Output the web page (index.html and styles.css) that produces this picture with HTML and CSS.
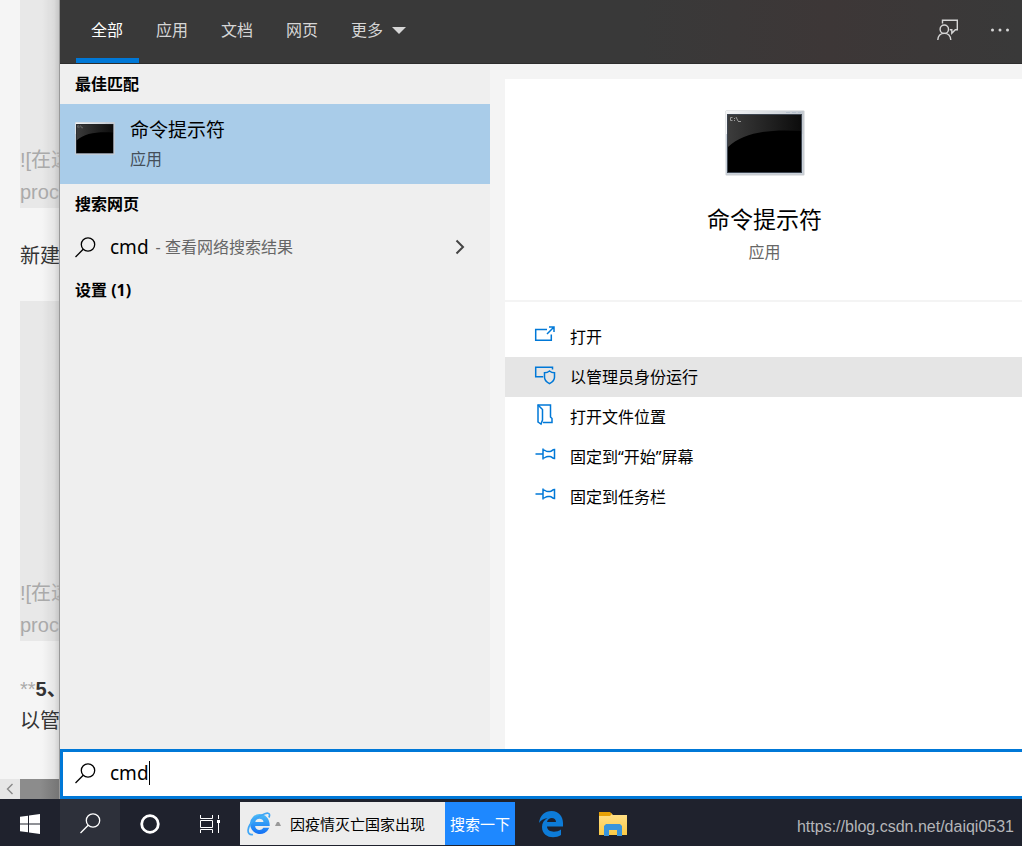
FILE: index.html
```html
<!DOCTYPE html>
<html lang="zh-CN">
<head>
<meta charset="utf-8">
<title>搜索</title>
<link rel="stylesheet" href="styles.css">
</head>
<body>
<svg class="defs" aria-hidden="true">
  <defs>
    <linearGradient id="frame" x1="0" y1="0" x2="1" y2="0"><stop offset="0" stop-color="#f4f5f6"/><stop offset="1" stop-color="#c3c9d0"/></linearGradient>
    <linearGradient id="gloss" x1="0" y1="0" x2="1" y2="0"><stop offset="0" stop-color="#3c3c3c"/><stop offset="1" stop-color="#0c0c0c"/></linearGradient>
    <linearGradient id="ie" x1="0" y1="0" x2="0" y2="1"><stop offset="0" stop-color="#4dbcf7"/><stop offset="1" stop-color="#1270f5"/></linearGradient>
    <linearGradient id="folder" x1="0" y1="0" x2="0" y2="1"><stop offset="0" stop-color="#ffe08a"/><stop offset="1" stop-color="#fccb45"/></linearGradient>
  </defs>
  <symbol id="console" viewBox="0 0 80 66">
    <rect x="0.5" y="0.5" width="79" height="65" rx="1" fill="#c9cdd2"/>
    <rect x="1" y="1" width="77" height="63" fill="#c9d1da"/>
    <rect x="1" y="1" width="77" height="23" fill="url(#frame)"/>
    <path d="M61 2.500h4M67 2.500h4M73 2.500h3" stroke="#b4bfcb"/>
    <rect x="2" y="4" width="75" height="59" fill="#3d4550"/>
    <rect x="3" y="5" width="73" height="57" fill="#000"/>
    <path d="M3 5h73v16C45 19 19 22 3 37z" fill="url(#gloss)"/>
    <path d="M7.500 7.500h-2v3h2M9.500 8v1M9.500 10v1M11 7l2 4M13 11.500h3" fill="none" stroke="#999"/>
  </symbol>
  <symbol id="magnifier" viewBox="0 0 21 21">
    <circle cx="13" cy="7.500" r="6.700" fill="none" stroke="currentColor" stroke-width="1.300"/>
    <path d="M8.200 12.300L.5 20" fill="none" stroke="currentColor" stroke-width="1.300"/>
  </symbol>
  <symbol id="pin" viewBox="0 0 22 22">
    <path d="M.5 8h7M8 2.500v11M8 4c3 0 2 1.500 5 1.500h2c2 0 2-2 4.500-2v9c-2.500 0-2.500-2-4.500-2h-2c-3 0-2 1.500-5 1.500" fill="none" stroke="currentColor" stroke-width="1.500"/>
  </symbol>
</svg>

<div class="desktop">
  <section class="editor">
    <div class="editor-text">
      <pre class="code code-first">![在这
proc</pre>
      <p class="line">新建</p>
      <pre class="code code-second">![在这
proc</pre>
      <p class="line last"><span class="stars">**</span><b>5、</b><br>以管</p>
    </div>
    <div class="scrollbar">
      <button class="scroll-arrow" aria-label="向左滚动"><svg width="8" height="12" viewBox="0 0 8 12"><path d="M6.500 1L1.500 6l5 5" fill="none" stroke="#888" stroke-width="1.400"/></svg></button>
      <div class="thumb"></div>
    </div>
  </section>

  <main class="panel">
    <header class="tabs">
      <button class="tab active">全部</button>
      <button class="tab">应用</button>
      <button class="tab">文档</button>
      <button class="tab">网页</button>
      <button class="tab">更多<svg width="14" height="7" viewBox="0 0 14 7"><path d="M0 0h14L7 7z" fill="currentColor"/></svg></button>
      <div class="tools">
        <button class="tool" aria-label="反馈"><svg width="22" height="22" viewBox="0 0 22 22" fill="none" stroke="currentColor" stroke-width="1.400"><path d="M5.500 4.500V1.200h14.800v9.600h-2l-3.500 3.500v-3.500h-2"/><circle cx="7.300" cy="10.200" r="4.200"/><path d="M.8 21c.3-4 2.900-6.600 6.500-6.600s6.200 2.600 6.500 6.600"/></svg></button>
        <button class="tool" aria-label="选项"><svg width="20" height="4" viewBox="0 0 20 4" fill="currentColor"><circle cx="2.500" cy="2" r="1.500"/><circle cx="10" cy="2" r="1.500"/><circle cx="17.500" cy="2" r="1.500"/></svg></button>
      </div>
    </header>

    <div class="content">
      <section class="results">
        <h2 class="group">最佳匹配</h2>
        <button class="best">
          <svg class="best-icon"><use href="#console"/></svg>
          <span class="best-text"><span class="best-name">命令提示符</span><span class="best-kind">应用</span></span>
        </button>
        <h2 class="group">搜索网页</h2>
        <button class="web">
          <svg class="glass"><use href="#magnifier"/></svg>
          <span class="query">cmd</span><span class="hint">- 查看网络搜索结果</span>
          <svg class="chevron" width="10" height="16" viewBox="0 0 10 16"><path d="M1.500 1.500L8 8l-6.500 6.500" fill="none" stroke="#444" stroke-width="2"/></svg>
        </button>
        <h2 class="group">设置 (1)</h2>
      </section>

      <section class="detail">
        <div class="hero">
          <svg class="hero-icon"><use href="#console"/></svg>
          <h1 class="hero-name">命令提示符</h1>
          <p class="hero-kind">应用</p>
        </div>
        <div class="actions">
          <button class="action"><svg class="action-icon" viewBox="0 0 22 22" fill="none" stroke="currentColor" stroke-width="1.500"><path d="M12 3.500H.7V14.300h15.600V8.500M12 8L18.500 1.500M14 1h5v5"/></svg>打开</button>
          <button class="action selected"><svg class="action-icon" viewBox="0 0 22 22" fill="none" stroke="currentColor" stroke-width="1.500"><path d="M17.500 3.500V1.200H.7v9.600h7.500"/><path d="M14.500 5c1.500 1.300 3.200 1.800 5 1.800v4.500c0 3-2 4.800-5 6.300-3-1.500-5-3.300-5-6.300V6.800c1.800 0 3.500-.5 5-1.800z"/></svg>以管理员身份运行</button>
          <button class="action"><svg class="action-icon" viewBox="0 0 22 22" fill="none" stroke="currentColor" stroke-width="1.500"><path d="M3 16.500V-1H15.500V11l1.500 1.500v4H8"/><path d="M3-1L7.500 3.500V14L6 18 3 16"/></svg>打开文件位置</button>
          <button class="action"><svg class="action-icon"><use href="#pin"/></svg>固定到“开始”屏幕</button>
          <button class="action"><svg class="action-icon"><use href="#pin"/></svg>固定到任务栏</button>
        </div>
      </section>
    </div>

    <label class="searchbox">
      <svg class="glass"><use href="#magnifier"/></svg>
      <span class="field"><input class="search-input" type="text" value="cmd" aria-label="搜索"><span class="caret"></span></span>
    </label>
  </main>
</div>

<footer class="taskbar">
  <button class="task" aria-label="开始"><svg width="20" height="20" viewBox="0 0 20 20" fill="#fff"><path d="M0 2.800L8 1.700V9.500H0zM9 1.500L20 0v9.500H9zM0 10.500h8v7.800l-8-1.100zM9 10.500h11V20L9 18.500z"/></svg></button>
  <button class="task open" aria-label="搜索"><svg class="glass"><use href="#magnifier"/></svg></button>
  <button class="task" aria-label="Cortana"><svg width="20" height="20" viewBox="0 0 20 20"><circle cx="10" cy="10" r="8.300" fill="none" stroke="#fff" stroke-width="2.800"/></svg></button>
  <button class="task" aria-label="任务视图"><svg width="22" height="20" viewBox="0 0 22 20" fill="none" stroke="#fff"><path d="M1.500 1v3.500h12V1M1.500 19v-3.500h12V19M1.500 6.500h12v7h-12zM19.500 1v4M19.500 9v10"/><path d="M18 6h3v3h-3z" fill="#fff" stroke="none"/></svg></button>
  <div class="newsbar">
    <svg width="24" height="24" viewBox="0 0 24 24"><path d="M12.500 2A10 10 0 1 0 22.300 15.800h-6c-2 3.400-7.800 2.800-8.200-1.800h14.600C23 7 18.500 2 12.500 2zM8.300 10c.5-4.400 7.800-4.400 8.200 0z" fill="url(#ie)" fill-rule="evenodd"/><path d="M6 22.500C-1 24-1 14 9 6.500 15 2 22-.5 22.500 2.500c.2 1-.1 2-.6 3" fill="none" stroke="#3fa6f6" stroke-width="1.700"/></svg>
    <svg width="6" height="4" viewBox="0 0 6 4"><path d="M0 4l2-4h2l2 4z" fill="#999"/></svg>
    <span class="news">因疫情灭亡国家出现</span>
    <button class="news-search">搜索一下</button>
  </div>
  <button class="task app" aria-label="Edge"><svg width="26" height="28" viewBox="0 0 26 28"><path d="M1 13C2 5 7 1 13.500 1 21 1 25 7 25 13v3.500H9c.3 6 9 6.500 14 3V25c-7 4.500-19 2.500-19-8 0-4 2-7 5.500-9C5.500 8.500 2.500 10.500 1 13zM9 12h9c0-5.500-8-5.500-9 0z" fill="#0d7cd8" fill-rule="evenodd"/></svg></button>
  <button class="task app" aria-label="文件资源管理器"><svg width="28" height="24" viewBox="0 0 28 24"><path d="M0 1h12l2 2h14v20H0z" fill="url(#folder)"/><path d="M0 0h11l2 2-2 2H0z" fill="#e6a106"/><path d="M5 24V14l2-2h14l2 2v10h-5v-6h-8v6z" fill="#3995dc"/></svg></button>
  <span class="watermark">https://blog.csdn.net/daiqi0531</span>
</footer>
</body>
</html>
```
FILE: styles.css
```css
* { box-sizing: border-box; }

body {
  margin: 0;
  min-height: 100vh;
  display: flex;
  flex-direction: column;
  font-family: "Noto Sans", "Noto Sans CJK SC", sans-serif;
  font-size: 16px;
  line-height: 24px;
  color: #000;
  overflow-x: hidden;
}

button {
  border: 0;
  padding: 0;
  background: none;
  font: inherit;
  color: inherit;
  text-align: left;
}

h1, h2, p, pre { margin: 0; }
svg { flex: none; display: block; }
.defs { position: absolute; width: 0; height: 0; }
.glass { width: 21px; height: 21px; }

.desktop { flex: 1; display: flex; }

/* Document window behind the search panel */
.editor {
  flex: 0 0 60px;
  min-width: 0;
  display: flex;
  flex-direction: column;
  overflow: hidden;
  background: linear-gradient(to right, transparent 42px, rgba(0, 0, 0, 0.06) 54px, rgba(0, 0, 0, 0.16)), #f5f5f5;
  color: #333;
  font-family: "Liberation Sans", "Noto Sans CJK SC", sans-serif;
  font-size: 20px;
  line-height: 32px;
  white-space: nowrap;
}
.editor-text { flex: 1; padding-left: 20px; }
.code {
  display: flex;
  align-items: flex-end;
  background: rgba(0, 0, 0, 0.05);
  color: #aaa;
  font: inherit;
}
.code-first { height: 208px; }
.code-second { height: 340px; }
.line { padding: 32px 0 29px; }
.stars { color: #aaa; }
.scrollbar { display: flex; height: 20px; }
.scroll-arrow {
  width: 20px;
  display: grid;
  place-items: center;
  background: #e6e6e6;
}
.thumb { flex: 1; background: linear-gradient(to right, #8c8c8c 20px, #747474); }

/* Search panel */
.panel {
  flex: 1;
  min-width: 0;
  display: flex;
  flex-direction: column;
  box-shadow: -1px 0 0 #999;
}
.tabs {
  height: 64px;
  display: flex;
  gap: 2px;
  padding-left: 16px;
  background: linear-gradient(to right, #393939 60%, #3d3737 80%, #393939);
  border-bottom: 1px solid #2d2d2d;
  color: #d6d6d6;
}
.tab {
  display: flex;
  align-items: center;
  gap: 9px;
  padding: 0 16px 0 15px;
  border-bottom: 5px solid transparent;
  border-top: 2px solid transparent;
  white-space: nowrap;
}
.tab.active { color: #fff; border-bottom-color: #0078d7; }
.tools {
  margin-left: auto;
  padding: 0 12px 4px 0;
  display: flex;
  align-items: center;
  gap: 31px;
}

.content { flex: 1; display: flex; }
.results { flex: 0 0 430px; background: #efefef; }
.group {
  padding: 8px 15px;
  font-size: 16px;
  line-height: 24px;
  font-weight: 700;
}
.best {
  width: 100%;
  height: 80px;
  display: flex;
  align-items: center;
  gap: 15px;
  padding: 0 15px 2px;
  background: #a9cce9;
}
.best-icon { width: 40px; height: 33px; margin-top: -10px; }
.best-text { display: flex; flex-direction: column; gap: 2px; }
.best-name { font-size: 19px; line-height: 30px; }
.best-kind { line-height: 24px; color: #444f59; }
.web {
  width: 100%;
  height: 46px;
  display: flex;
  align-items: center;
  padding: 0 25px 0 15px;
}
.query { margin-left: 14px; font-size: 19px; }
.hint { margin-left: 7px; color: #666; }
.chevron { margin-left: auto; }

.detail {
  flex: 1;
  display: flex;
  flex-direction: column;
  padding: 15px 0 0 15px;
  background: #f4f4f4;
}
.hero {
  display: flex;
  flex-direction: column;
  align-items: center;
  padding: 31px 0 36px 2px;
  background: #fff;
}
.hero-icon { width: 80px; height: 66px; }
.hero-name {
  margin-top: 26px;
  font-size: 23px;
  line-height: 34px;
  font-weight: 400;
}
.hero-kind { margin-top: 4px; line-height: 24px; color: #666; }
.actions {
  flex: 1;
  margin-top: 2px;
  padding-top: 15px;
  background: #fff;
}
.action {
  width: 100%;
  height: 40px;
  display: flex;
  align-items: center;
  gap: 13px;
  padding-left: 30px;
}
.selected { background: #e5e5e5; }
.action-icon { width: 22px; height: 22px; color: #0078d7; overflow: visible; }

.searchbox {
  height: 50px;
  display: flex;
  align-items: center;
  gap: 14px;
  padding: 0 0 2px 12px;
  border: 3px solid #0078d7;
  border-right: 0;
  background: #fff;
}
.field { position: relative; flex: 1; display: flex; }
.search-input {
  flex: 1;
  min-width: 0;
  padding: 0;
  border: 0;
  outline: 0;
  background: none;
  font: inherit;
  font-size: 19px;
  line-height: 28px;
}
.caret {
  position: absolute;
  left: 39px;
  top: 2px;
  width: 1px;
  height: 24px;
  background: #000;
}

/* Taskbar */
.taskbar {
  height: 47px;
  display: flex;
  align-items: center;
  padding-right: 8px;
  background: #1f222d;
  color: #fff;
}
.task {
  flex: 0 0 60px;
  height: 100%;
  padding-top: 2px;
  display: grid;
  place-items: center;
}
.open { background: #2d303a; }
.app { margin-left: 6px; }
.app + .app { margin-left: 2px; }
.newsbar {
  height: 43px;
  margin-top: 2px;
  display: flex;
  align-items: center;
  padding-left: 7px;
  gap: 4px;
  background: #ededed;
  color: #000;
  font-size: 15px;
  white-space: nowrap;
}
.news { padding: 0 16px 0 5px; }
.news-search {
  height: 100%;
  padding: 0 5px;
  background: #1e88ff;
  color: #fff;
}
.watermark {
  margin-left: auto;
  padding-top: 8px;
  color: #b5b6b9;
  font-family: "Liberation Sans", sans-serif;
}
```
